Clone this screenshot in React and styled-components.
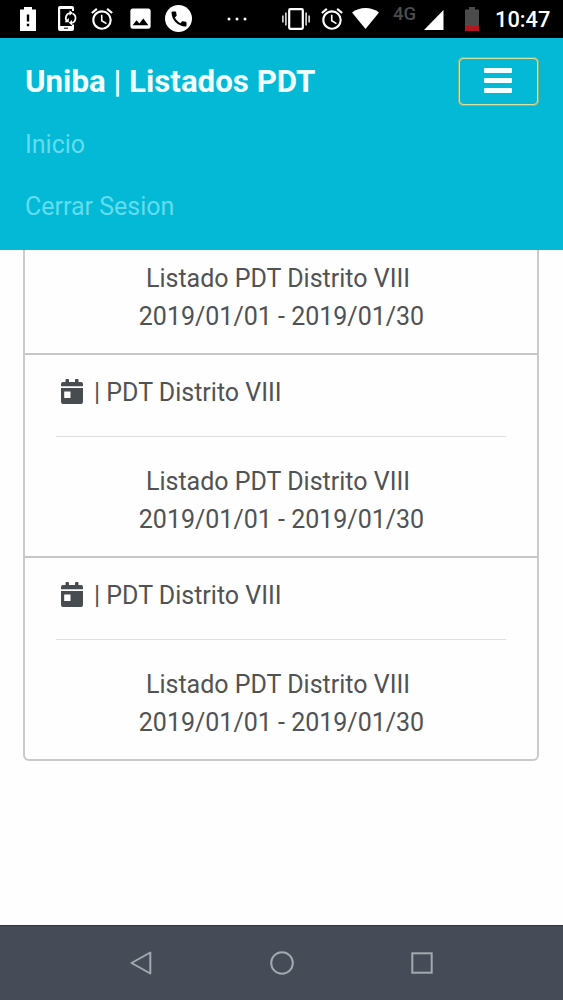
import * as React from "react"
import styled, { createGlobalStyle } from "styled-components"
import { MdAlarm, MdImage, MdCall } from "react-icons/md"

const GlobalStyle = createGlobalStyle`
  * {
    box-sizing: border-box;
  }

  body {
    margin: 0;
    background: #fefefe;
    font-family: Roboto, sans-serif;
    overflow: hidden;
  }
`

const Screen = styled.div`
  display: flex;
  flex-direction: column;
  width: 563px;
  height: 1000px;
`

const StatusBar = styled.div`
  display: flex;
  align-items: flex-start;
  flex: none;
  height: 38px;
  background: #000;
  color: #fff;

  svg {
    display: block;
    flex: none;
  }
`

const StatusItem = styled.div`
  display: flex;
  flex: none;
  width: ${(props) => props.$width}px;
  margin-left: ${(props) => props.$left}px;
  padding-top: ${(props) => props.$top}px;
`

const CallBadge = styled.div`
  display: flex;
  align-items: center;
  justify-content: center;
  width: 27px;
  height: 27px;
  border-radius: 50%;
  background: #fff;
  color: #000;
`

const Network = styled.span`
  color: #4c4c4c;
  font-size: 18.5px;
  font-weight: 500;
  line-height: 20px;
`

const Clock = styled.span`
  font-size: 21.8px;
  font-weight: 500;
  line-height: 26px;
  white-space: nowrap;
`

const Navbar = styled.header`
  flex: none;
  height: 212px;
  padding: 18px 24px 0 25px;
  background: #04b9d6;
`

const NavbarTop = styled.div`
  display: flex;
  align-items: center;
  justify-content: space-between;
  height: 50px;
`

const Brand = styled.a`
  color: #f2ffff;
  font-size: 31.25px;
  font-weight: 700;
  line-height: 47px;
  white-space: nowrap;
`

const Toggler = styled.button`
  display: flex;
  align-items: center;
  justify-content: center;
  width: 81px;
  height: 49px;
  padding: 0 2px 1px 0;
  border: 2px solid #d8e3a2;
  border-radius: 6px;
  outline: 1px solid #8fae68;
  outline-offset: -1px;
  background: transparent;
`

const Nav = styled.nav`
  display: flex;
  flex-direction: column;
  padding-top: 7px;
`

const NavItem = styled.a`
  color: #62dcee;
  font-size: 25px;
  line-height: 37.5px;
  padding: 12.5px 0;
`

const Content = styled.main`
  flex: 1;
  padding: 0 24px 0 23px;
`

const List = styled.ul`
  list-style: none;
  margin: 0;
  padding: 0;
  border: 2px solid #cacaca;
  border-top: 0;
  border-radius: 0 0 6px 6px;
`

const Item = styled.li`
  height: ${(props) => (props.$cut ? 103 : 203)}px;
  padding: ${(props) => (props.$cut ? 9.5 : 19)}px 31px 0;
  color: #505254;
  font-size: 25px;
  line-height: 37.5px;

  & + & {
    border-top: 2px solid #c6c6c6;
  }
`

const ItemTitle = styled.div`
  display: flex;
  align-items: center;
  gap: 11px;
  padding-left: 5px;

  svg {
    flex: none;
    margin-bottom: 2px;
  }
`

const Divider = styled.hr`
  height: 1px;
  margin: 24px 0 26px;
  border: 0;
  background: #dedede;
`

const Name = styled.p`
  margin: 0;
  padding-right: 6px;
  text-align: center;
`

const Dates = styled.p`
  margin: 0;
  padding: 0.5px 0 0 1px;
  text-align: center;
`

const AndroidBar = styled.footer`
  display: flex;
  align-items: flex-start;
  justify-content: space-between;
  flex: none;
  height: 75px;
  padding: 24.5px 130px 0;
  border-top: 1px solid #30363c;
  background: #464c57;
`

const items = [
  { id: 1, cut: true },
  { id: 2 },
  { id: 3 },
]

const CalendarIcon = () => (
  <svg width="22" height="25" viewBox="0 0 22 25" fill="#474c50">
    <path d="M4.500 3V1a1 1 0 0 1 1-1h1.500a1 1 0 0 1 1 1v2h6V1a1 1 0 0 1 1-1h1.500a1 1 0 0 1 1 1v2H20a2 2 0 0 1 2 2v2.300H0V5a2 2 0 0 1 2-2z" />
    <path fillRule="evenodd" d="M0 9h22v14a2 2 0 0 1-2 2H2a2 2 0 0 1-2-2zM3.200 12.500v6.500h6.300v-6.500z" />
  </svg>
)

const ListItem = ({ cut }) => (
  <Item $cut={cut}>
    {!cut && (
      <>
        <ItemTitle>
          <CalendarIcon />
          <span>| PDT Distrito VIII</span>
        </ItemTitle>
        <Divider />
      </>
    )}
    <Name>Listado PDT Distrito VIII</Name>
    <Dates>2019/01/01 - 2019/01/30</Dates>
  </Item>
)

const Status = () => (
  <StatusBar>
    <StatusItem $width={16} $left={20} $top={7}>
      <svg width="16" height="24" viewBox="0 0 16 24">
        <path fill="#fff" d="M4 0h8v2.5h4V24H0V2.5h4z" />
        <path fill="#000" d="M6.8 7.5h2.4v7H6.8zM6.8 16.8h2.4v2.5H6.8z" />
      </svg>
    </StatusItem>
    <StatusItem $width={20} $left={22} $top={6}>
      <svg width="20" height="25" viewBox="0 0 20 25" fill="none" stroke="#fff">
        <path fill="#fff" stroke="none" d="M2 0h12a2 2 0 0 1 2 2v3h-2V3H2.200v17H14V18.500h2V23a2 2 0 0 1-2 2H2a2 2 0 0 1-2-2V2a2 2 0 0 1 2-2z" />
        <path stroke="#000" d="M6 22.200h4" />
        <path strokeWidth="1.700" d="M9.300 15.500A5 5 0 0 1 12 7M14.500 7.500a5 5 0 0 1-1 9.500" />
        <path fill="#fff" stroke="none" d="M11.500 4.200l3.300 2.800-3.300 2.800zM14 14v5.500l-3.200-2.700zM6.500 16.300h4.300V12z" />
      </svg>
    </StatusItem>
    <StatusItem $width={26} $left={11} $top={6}>
      <MdAlarm size={26} />
    </StatusItem>
    <StatusItem $width={27} $left={12} $top={5}>
      <MdImage size={27} />
    </StatusItem>
    <StatusItem $width={27} $left={11} $top={5}>
      <CallBadge>
        <MdCall size={20} />
      </CallBadge>
    </StatusItem>
    <StatusItem $width={20} $left={35} $top={17}>
      <svg width="20" height="4" viewBox="0 0 20 4" fill="#fff">
        <circle cx="2" cy="2" r="1.500" />
        <circle cx="10" cy="2" r="1.500" />
        <circle cx="18" cy="2" r="1.500" />
      </svg>
    </StatusItem>
    <StatusItem $width={28} $left={35} $top={8}>
      <svg width="28" height="22" viewBox="0 0 28 22" fill="none" stroke="#fff">
        <rect x="7.200" y="1.200" width="13.600" height="19.600" rx="1" strokeWidth="2.200" />
        <path strokeWidth="1.400" d="M.9 7.500v7M27.100 7.500v7M3.900 4.500v13M24.100 4.500v13" />
      </svg>
    </StatusItem>
    <StatusItem $width={26} $left={9} $top={6}>
      <MdAlarm size={26} />
    </StatusItem>
    <StatusItem $width={28} $left={7} $top={8}>
      <svg width="27" height="21" viewBox="0 0 27 21" fill="#fff">
        <path d="M13.500 21L0 4.500C7.500-1.500 19.500-1.500 27 4.500z" />
      </svg>
    </StatusItem>
    <StatusItem $width={30} $left={13} $top={4}>
      <Network>4G</Network>
    </StatusItem>
    <StatusItem $width={20} $left={1} $top={10}>
      <svg width="20" height="20" viewBox="0 0 20 20" fill="#fff">
        <path d="M19.500 0v20H0z" />
      </svg>
    </StatusItem>
    <StatusItem $width={14} $left={21} $top={7}>
      <svg width="14" height="24" viewBox="0 0 14 24">
        <path fill="#4b4b4b" d="M4 0h6v2.500h4V19H0V2.500h4z" />
        <path fill="#b4161b" d="M0 19h14v5H0z" />
      </svg>
    </StatusItem>
    <StatusItem $width={60} $left={16} $top={7}>
      <Clock>10:47</Clock>
    </StatusItem>
  </StatusBar>
)

const App = () => {
  return (
    <Screen>
      <GlobalStyle />
      <Status />
      <Navbar>
        <NavbarTop>
          <Brand>Uniba | Listados PDT</Brand>
          <Toggler aria-label="Menu">
            <svg width="28" height="25" viewBox="0 0 28 25" fill="#f4ffff">
              <rect width="28" height="5" rx="1" />
              <rect y="10" width="28" height="5" rx="1" />
              <rect y="20" width="28" height="5" rx="1" />
            </svg>
          </Toggler>
        </NavbarTop>
        <Nav>
          <NavItem>Inicio</NavItem>
          <NavItem>Cerrar Sesion</NavItem>
        </Nav>
      </Navbar>
      <Content>
        <List>
          {items.map((item) => (
            <ListItem key={item.id} cut={item.cut} />
          ))}
        </List>
      </Content>
      <AndroidBar>
        <svg width="22" height="24" viewBox="0 0 22 24" fill="none" stroke="#a3a9ae" strokeWidth="2">
          <path strokeLinejoin="round" d="M20.300 1.500v21L1.500 12z" />
        </svg>
        <svg width="24" height="24" viewBox="0 0 24 24" fill="none" stroke="#a3a9ae" strokeWidth="2">
          <circle cx="12" cy="12" r="10.800" />
        </svg>
        <svg width="22" height="24" viewBox="0 0 22 24" fill="none" stroke="#a3a9ae" strokeWidth="2">
          <rect x="1.300" y="2.300" width="19.400" height="19.400" />
        </svg>
      </AndroidBar>
    </Screen>
  )
}

export default App
